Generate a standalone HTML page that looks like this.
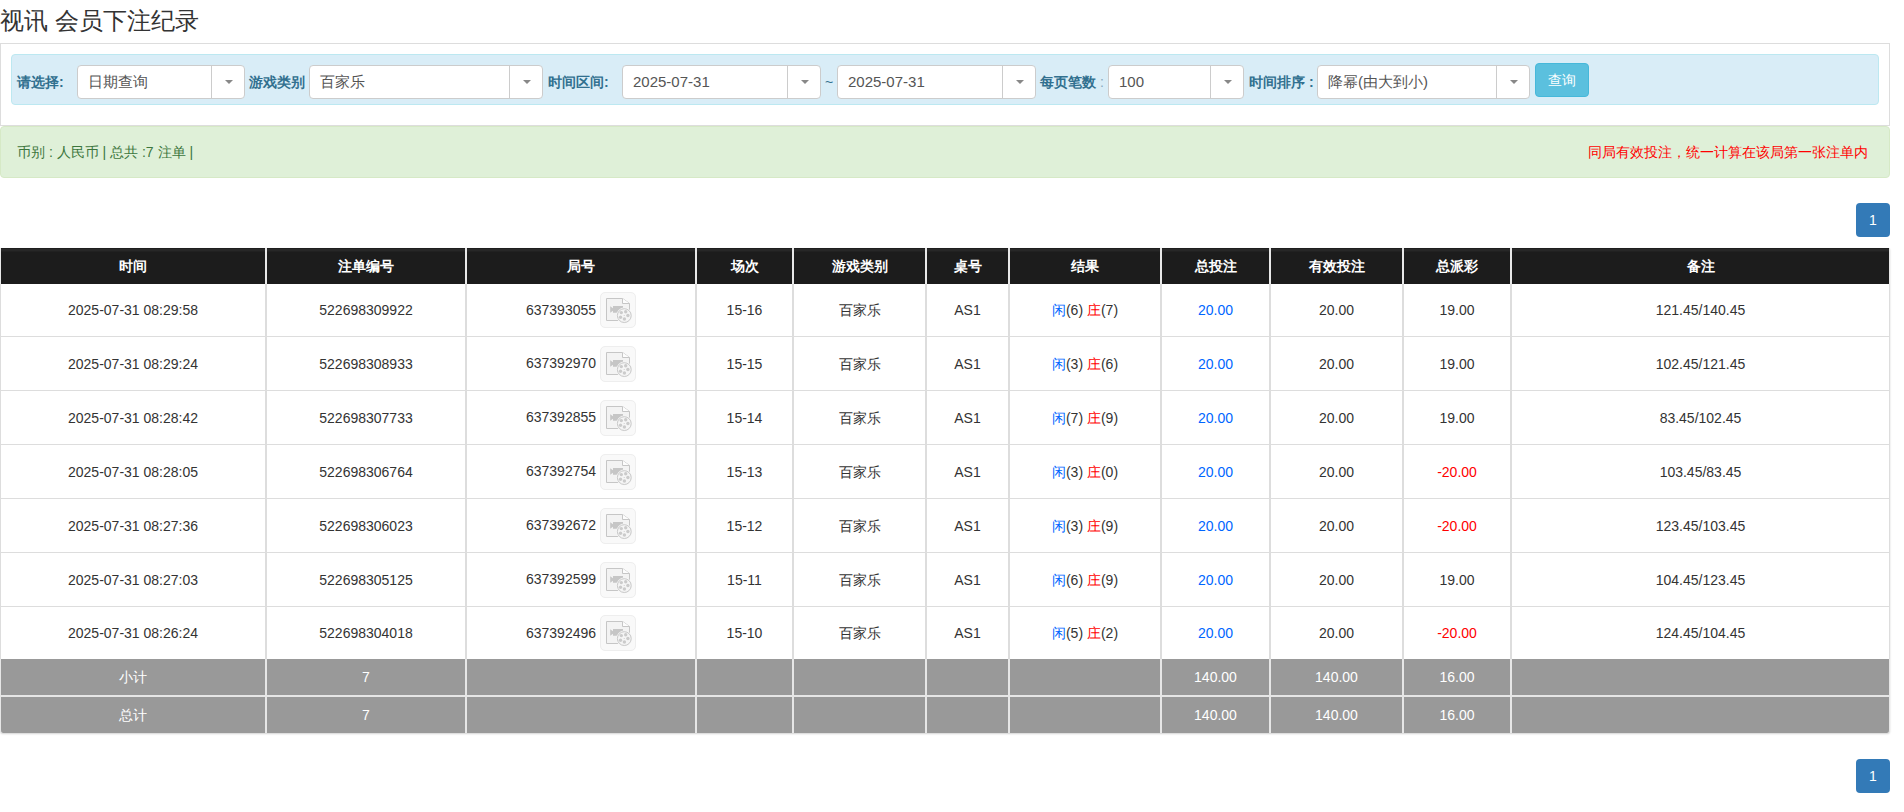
<!DOCTYPE html>
<html><head><meta charset="utf-8">
<style>
*{box-sizing:border-box}
html,body{margin:0;padding:0;background:#fff}
body{width:1904px;height:812px;overflow:hidden;position:relative;font-family:"Liberation Sans",sans-serif;font-size:14px;line-height:20px;color:#333}
.abs{position:absolute}
.title{left:0;top:0;font-size:24px;line-height:42px;color:#333;white-space:nowrap}
.panel{left:0;top:43px;width:1890px;height:83px;border:1px solid #ddd}
.filter{left:11px;top:54px;width:1868px;height:51px;border:1px solid #bce8f1;background:#d9edf7;border-radius:4px}
.lbl{position:absolute;top:73px;line-height:18px;font-size:14px;font-weight:bold;color:#31708f;white-space:nowrap}
.sel{position:absolute;top:65px;height:34px;border:1px solid #ccc;border-radius:4px;background:#fff}
.sel .t{position:absolute;left:10px;top:0;line-height:32px;font-size:15px;color:#555;white-space:nowrap}
.sel .d{position:absolute;top:0;right:0;bottom:0;border-left:1px solid #ccc}
.sel .d:after{content:"";position:absolute;left:50%;top:50%;margin-left:-3px;margin-top:-2px;border-left:4px solid transparent;border-right:4px solid transparent;border-top:4px solid #888}
.btn{left:1535px;top:63px;width:54px;height:34px;background:#5bc0de;border:1px solid #46b8da;border-radius:4px;color:#fff;font-size:14px;line-height:32px;text-align:center}
.alert{left:0;top:126px;width:1890px;height:52px;background:#dff0d8;border:1px solid #d6e9c6;border-radius:4px}
.alert .l{position:absolute;left:16px;top:0;line-height:50px;color:#3c763d;font-size:14px;white-space:nowrap}
.alert .r{position:absolute;right:21px;top:0;line-height:50px;color:#f00;font-size:14px;white-space:nowrap}
.pg{left:1856px;width:34px;height:34px;background:#337ab7;border-radius:4px;color:#fff;text-align:center;line-height:34px;font-size:14px}
table{position:absolute;left:0;top:248px;border-collapse:separate;border-spacing:0;table-layout:fixed;width:1890px}
th,td{padding:0;text-align:center;white-space:nowrap;border-left:1px solid #ddd;border-right:1px solid #ddd}
th{background:linear-gradient(#1f1f1f 0,#1f1f1f 1px,#2a2a2a 1px,#262626 3px,#1c1c1c 4px);color:#fff;font-weight:bold;height:36px;border-color:#e8e8e8}
td{height:54px;border-bottom:1px solid #ddd}
tr.r1 td{height:53px}
tr.r7 td{height:52px;border-bottom:0}
tr.sum td{background:#999;color:#fff;height:36px;border-color:#e6e6e6;border-bottom:0}
tr.s2 td:first-child{border-bottom-left-radius:3px}
tr.s2 td:last-child{border-bottom-right-radius:3px}
.shadow{left:0;top:248px;width:1890px;height:485px;border-radius:0 0 3px 3px;box-shadow:0 1px 2px rgba(0,0,0,.18)}
tr.s1 td{height:38px;border-bottom:2px solid #e6e6e6}
.b{color:#0066ff}
.rd{color:#f00}
.ic{display:inline-block;vertical-align:middle;width:36px;height:36px;margin-left:4px;border:1px solid #eee;border-radius:5px;background:#f9f9f9;position:relative;top:0}
.n{position:relative;top:1px}
.ic svg{position:absolute;left:-1px;top:-1px}
</style></head><body>
<div class="abs title">视讯 会员下注纪录</div>
<div class="abs panel"></div>
<div class="abs filter"></div>
<div class="lbl" style="left:17px">请选择:</div>
<div class="sel" style="left:77px;width:168px"><span class="t">日期查询</span><span class="d" style="width:33px"></span></div>
<div class="lbl" style="left:249px">游戏类别</div>
<div class="sel" style="left:309px;width:234px"><span class="t">百家乐</span><span class="d" style="width:33px"></span></div>
<div class="lbl" style="left:548px">时间区间:</div>
<div class="sel" style="left:622px;width:199px"><span class="t">2025-07-31</span><span class="d" style="width:33px"></span></div>
<div class="lbl" style="left:825px;font-weight:normal;color:#31708f">~</div>
<div class="sel" style="left:837px;width:199px"><span class="t">2025-07-31</span><span class="d" style="width:33px"></span></div>
<div class="lbl" style="left:1040px">每页笔数 <span style="font-weight:normal;color:#8ab">:</span></div>
<div class="sel" style="left:1108px;width:136px"><span class="t">100</span><span class="d" style="width:33px"></span></div>
<div class="lbl" style="left:1249px">时间排序 :</div>
<div class="sel" style="left:1317px;width:213px"><span class="t">降幂(由大到小)</span><span class="d" style="width:33px"></span></div>
<div class="abs btn">查询</div>
<div class="abs alert"><span class="l">币别 : 人民币 | 总共 :7 注单 |</span><span class="r">同局有效投注，统一计算在该局第一张注单内</span></div>
<div class="abs pg" style="top:203px">1</div>
<div class="abs pg" style="top:759px">1</div>
<div class="abs shadow"></div>
<table><colgroup><col style="width:266px"><col style="width:200px"><col style="width:230px"><col style="width:97px"><col style="width:133px"><col style="width:83px"><col style="width:152px"><col style="width:109px"><col style="width:133px"><col style="width:108px"><col style="width:379px"></colgroup>
<thead><tr><th>时间</th><th>注单编号</th><th>局号</th><th>场次</th><th>游戏类别</th><th>桌号</th><th>结果</th><th>总投注</th><th>有效投注</th><th>总派彩</th><th>备注</th></tr></thead><tbody>
<tr class="r1"><td>2025-07-31 08:29:58</td><td>522698309922</td><td><span class="n">637393055</span><span class="ic"><svg width="36" height="36" viewBox="0 0 36 36"><path d="M6.5 6.5H22.5L29.5 11.5V28.5H6.5Z" fill="#f3f3f3" stroke="#c6c6c6" stroke-width="1"/><path d="M22.5 6.5V11.5H29.5" fill="#fdfdfd" stroke="#c6c6c6" stroke-width="1"/><path d="M10.2 14.2L13 16.2V14H23V20.8H13V18.8L10.2 20.8Z" fill="#c6c6c6"/><circle cx="24.3" cy="23.6" r="8" fill="#f7f7f7"/><circle cx="24.3" cy="23.6" r="6.9" fill="#f5f5f5" stroke="#c8c8c8" stroke-width="1"/><g fill="#cbcbcb"><circle cx="21.3" cy="20.6" r="1.7"/><circle cx="25.7" cy="19.7" r="1.7"/><circle cx="27.9" cy="23.5" r="1.7"/><circle cx="24.4" cy="27" r="1.7"/><circle cx="20.5" cy="25.3" r="1.7"/><circle cx="24.2" cy="23.5" r=".6"/></g></svg></span></td><td>15-16</td><td>百家乐</td><td>AS1</td><td><span class="b">闲</span>(6) <span class="rd">庄</span>(7)</td><td><span class="b">20.00</span></td><td>20.00</td><td>19.00</td><td>121.45/140.45</td></tr>
<tr><td>2025-07-31 08:29:24</td><td>522698308933</td><td><span class="n">637392970</span><span class="ic"><svg width="36" height="36" viewBox="0 0 36 36"><path d="M6.5 6.5H22.5L29.5 11.5V28.5H6.5Z" fill="#f3f3f3" stroke="#c6c6c6" stroke-width="1"/><path d="M22.5 6.5V11.5H29.5" fill="#fdfdfd" stroke="#c6c6c6" stroke-width="1"/><path d="M10.2 14.2L13 16.2V14H23V20.8H13V18.8L10.2 20.8Z" fill="#c6c6c6"/><circle cx="24.3" cy="23.6" r="8" fill="#f7f7f7"/><circle cx="24.3" cy="23.6" r="6.9" fill="#f5f5f5" stroke="#c8c8c8" stroke-width="1"/><g fill="#cbcbcb"><circle cx="21.3" cy="20.6" r="1.7"/><circle cx="25.7" cy="19.7" r="1.7"/><circle cx="27.9" cy="23.5" r="1.7"/><circle cx="24.4" cy="27" r="1.7"/><circle cx="20.5" cy="25.3" r="1.7"/><circle cx="24.2" cy="23.5" r=".6"/></g></svg></span></td><td>15-15</td><td>百家乐</td><td>AS1</td><td><span class="b">闲</span>(3) <span class="rd">庄</span>(6)</td><td><span class="b">20.00</span></td><td>20.00</td><td>19.00</td><td>102.45/121.45</td></tr>
<tr><td>2025-07-31 08:28:42</td><td>522698307733</td><td><span class="n">637392855</span><span class="ic"><svg width="36" height="36" viewBox="0 0 36 36"><path d="M6.5 6.5H22.5L29.5 11.5V28.5H6.5Z" fill="#f3f3f3" stroke="#c6c6c6" stroke-width="1"/><path d="M22.5 6.5V11.5H29.5" fill="#fdfdfd" stroke="#c6c6c6" stroke-width="1"/><path d="M10.2 14.2L13 16.2V14H23V20.8H13V18.8L10.2 20.8Z" fill="#c6c6c6"/><circle cx="24.3" cy="23.6" r="8" fill="#f7f7f7"/><circle cx="24.3" cy="23.6" r="6.9" fill="#f5f5f5" stroke="#c8c8c8" stroke-width="1"/><g fill="#cbcbcb"><circle cx="21.3" cy="20.6" r="1.7"/><circle cx="25.7" cy="19.7" r="1.7"/><circle cx="27.9" cy="23.5" r="1.7"/><circle cx="24.4" cy="27" r="1.7"/><circle cx="20.5" cy="25.3" r="1.7"/><circle cx="24.2" cy="23.5" r=".6"/></g></svg></span></td><td>15-14</td><td>百家乐</td><td>AS1</td><td><span class="b">闲</span>(7) <span class="rd">庄</span>(9)</td><td><span class="b">20.00</span></td><td>20.00</td><td>19.00</td><td>83.45/102.45</td></tr>
<tr><td>2025-07-31 08:28:05</td><td>522698306764</td><td><span class="n">637392754</span><span class="ic"><svg width="36" height="36" viewBox="0 0 36 36"><path d="M6.5 6.5H22.5L29.5 11.5V28.5H6.5Z" fill="#f3f3f3" stroke="#c6c6c6" stroke-width="1"/><path d="M22.5 6.5V11.5H29.5" fill="#fdfdfd" stroke="#c6c6c6" stroke-width="1"/><path d="M10.2 14.2L13 16.2V14H23V20.8H13V18.8L10.2 20.8Z" fill="#c6c6c6"/><circle cx="24.3" cy="23.6" r="8" fill="#f7f7f7"/><circle cx="24.3" cy="23.6" r="6.9" fill="#f5f5f5" stroke="#c8c8c8" stroke-width="1"/><g fill="#cbcbcb"><circle cx="21.3" cy="20.6" r="1.7"/><circle cx="25.7" cy="19.7" r="1.7"/><circle cx="27.9" cy="23.5" r="1.7"/><circle cx="24.4" cy="27" r="1.7"/><circle cx="20.5" cy="25.3" r="1.7"/><circle cx="24.2" cy="23.5" r=".6"/></g></svg></span></td><td>15-13</td><td>百家乐</td><td>AS1</td><td><span class="b">闲</span>(3) <span class="rd">庄</span>(0)</td><td><span class="b">20.00</span></td><td>20.00</td><td><span class="rd">-20.00</span></td><td>103.45/83.45</td></tr>
<tr><td>2025-07-31 08:27:36</td><td>522698306023</td><td><span class="n">637392672</span><span class="ic"><svg width="36" height="36" viewBox="0 0 36 36"><path d="M6.5 6.5H22.5L29.5 11.5V28.5H6.5Z" fill="#f3f3f3" stroke="#c6c6c6" stroke-width="1"/><path d="M22.5 6.5V11.5H29.5" fill="#fdfdfd" stroke="#c6c6c6" stroke-width="1"/><path d="M10.2 14.2L13 16.2V14H23V20.8H13V18.8L10.2 20.8Z" fill="#c6c6c6"/><circle cx="24.3" cy="23.6" r="8" fill="#f7f7f7"/><circle cx="24.3" cy="23.6" r="6.9" fill="#f5f5f5" stroke="#c8c8c8" stroke-width="1"/><g fill="#cbcbcb"><circle cx="21.3" cy="20.6" r="1.7"/><circle cx="25.7" cy="19.7" r="1.7"/><circle cx="27.9" cy="23.5" r="1.7"/><circle cx="24.4" cy="27" r="1.7"/><circle cx="20.5" cy="25.3" r="1.7"/><circle cx="24.2" cy="23.5" r=".6"/></g></svg></span></td><td>15-12</td><td>百家乐</td><td>AS1</td><td><span class="b">闲</span>(3) <span class="rd">庄</span>(9)</td><td><span class="b">20.00</span></td><td>20.00</td><td><span class="rd">-20.00</span></td><td>123.45/103.45</td></tr>
<tr><td>2025-07-31 08:27:03</td><td>522698305125</td><td><span class="n">637392599</span><span class="ic"><svg width="36" height="36" viewBox="0 0 36 36"><path d="M6.5 6.5H22.5L29.5 11.5V28.5H6.5Z" fill="#f3f3f3" stroke="#c6c6c6" stroke-width="1"/><path d="M22.5 6.5V11.5H29.5" fill="#fdfdfd" stroke="#c6c6c6" stroke-width="1"/><path d="M10.2 14.2L13 16.2V14H23V20.8H13V18.8L10.2 20.8Z" fill="#c6c6c6"/><circle cx="24.3" cy="23.6" r="8" fill="#f7f7f7"/><circle cx="24.3" cy="23.6" r="6.9" fill="#f5f5f5" stroke="#c8c8c8" stroke-width="1"/><g fill="#cbcbcb"><circle cx="21.3" cy="20.6" r="1.7"/><circle cx="25.7" cy="19.7" r="1.7"/><circle cx="27.9" cy="23.5" r="1.7"/><circle cx="24.4" cy="27" r="1.7"/><circle cx="20.5" cy="25.3" r="1.7"/><circle cx="24.2" cy="23.5" r=".6"/></g></svg></span></td><td>15-11</td><td>百家乐</td><td>AS1</td><td><span class="b">闲</span>(6) <span class="rd">庄</span>(9)</td><td><span class="b">20.00</span></td><td>20.00</td><td>19.00</td><td>104.45/123.45</td></tr>
<tr class="r7"><td>2025-07-31 08:26:24</td><td>522698304018</td><td><span class="n">637392496</span><span class="ic"><svg width="36" height="36" viewBox="0 0 36 36"><path d="M6.5 6.5H22.5L29.5 11.5V28.5H6.5Z" fill="#f3f3f3" stroke="#c6c6c6" stroke-width="1"/><path d="M22.5 6.5V11.5H29.5" fill="#fdfdfd" stroke="#c6c6c6" stroke-width="1"/><path d="M10.2 14.2L13 16.2V14H23V20.8H13V18.8L10.2 20.8Z" fill="#c6c6c6"/><circle cx="24.3" cy="23.6" r="8" fill="#f7f7f7"/><circle cx="24.3" cy="23.6" r="6.9" fill="#f5f5f5" stroke="#c8c8c8" stroke-width="1"/><g fill="#cbcbcb"><circle cx="21.3" cy="20.6" r="1.7"/><circle cx="25.7" cy="19.7" r="1.7"/><circle cx="27.9" cy="23.5" r="1.7"/><circle cx="24.4" cy="27" r="1.7"/><circle cx="20.5" cy="25.3" r="1.7"/><circle cx="24.2" cy="23.5" r=".6"/></g></svg></span></td><td>15-10</td><td>百家乐</td><td>AS1</td><td><span class="b">闲</span>(5) <span class="rd">庄</span>(2)</td><td><span class="b">20.00</span></td><td>20.00</td><td><span class="rd">-20.00</span></td><td>124.45/104.45</td></tr>
<tr class="sum s1"><td>小计</td><td>7</td><td></td><td></td><td></td><td></td><td></td><td>140.00</td><td>140.00</td><td>16.00</td><td></td></tr>
<tr class="sum s2"><td>总计</td><td>7</td><td></td><td></td><td></td><td></td><td></td><td>140.00</td><td>140.00</td><td>16.00</td><td></td></tr>
</tbody></table>
</body></html>
